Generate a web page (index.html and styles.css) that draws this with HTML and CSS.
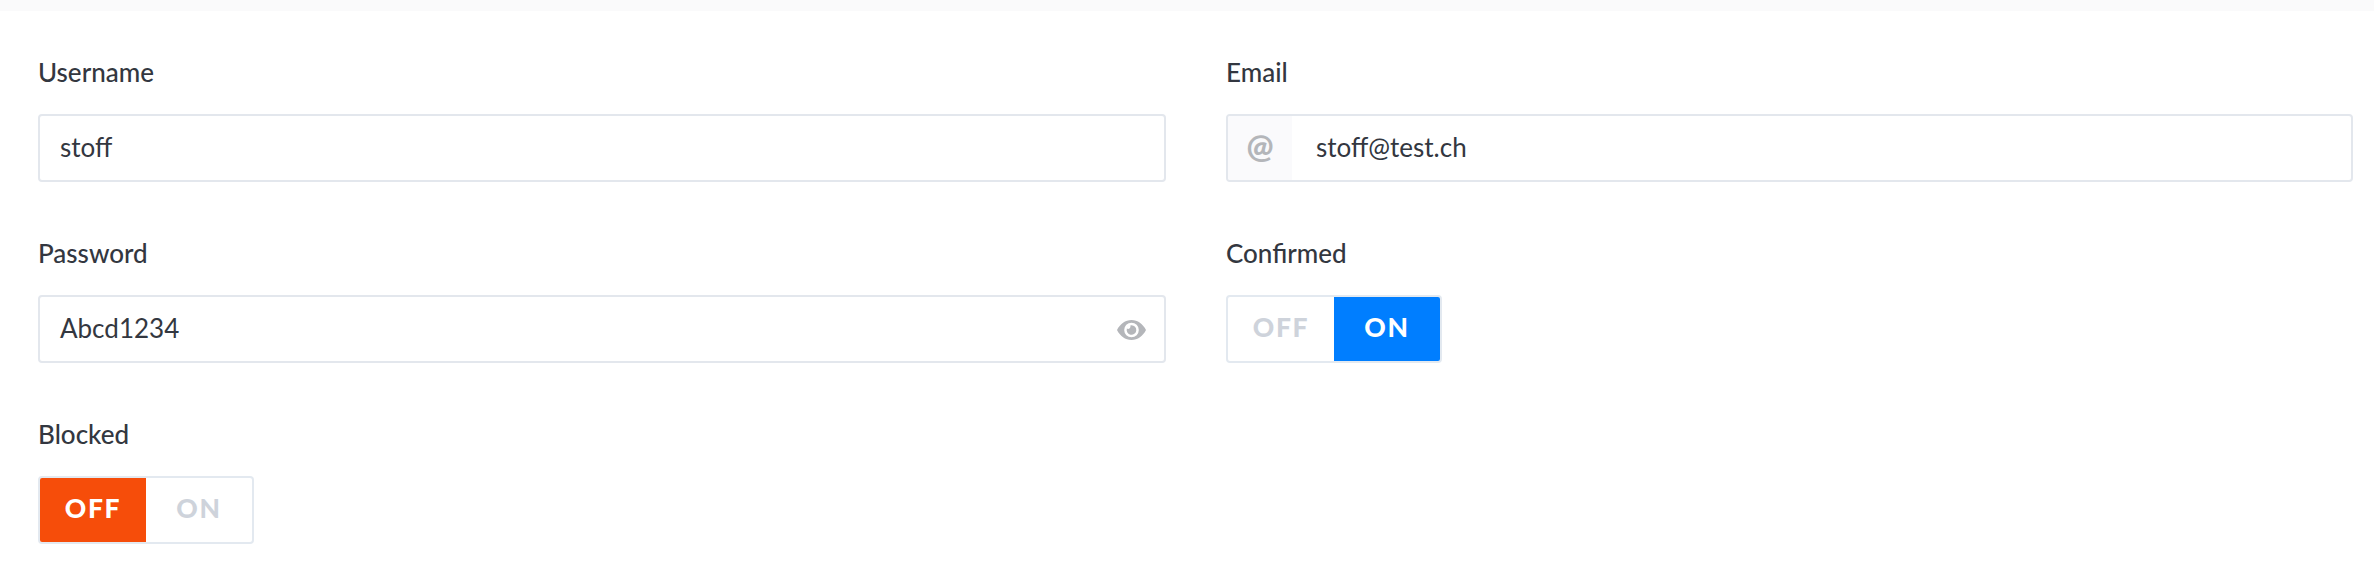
FILE: index.html
```html
<!DOCTYPE html>
<html lang="en">
<head>
<meta charset="utf-8">
<title>User</title>
<link rel="stylesheet" href="styles.css">
</head>
<body>
<div class="strip"></div>
<form class="form">
  <div class="field">
    <label class="label">Username</label>
    <div class="input"><span class="value">stoff</span></div>
  </div>
  <div class="field">
    <label class="label">Email</label>
    <div class="input"><span class="addon">@</span><span class="value value-email">stoff@test.ch</span></div>
  </div>
  <div class="field">
    <label class="label">Password</label>
    <div class="input"><span class="value">Abcd1234</span>
      <svg class="eye" viewBox="0 0 29 20"><path fill="#b4b6ba" fill-rule="evenodd" d="M0 10C3 4 8.300 0 14.500 0S26 4 29 10C26 16 20.700 20 14.500 20S3 16 0 10ZM14.500 2.700a7.300 7.300 0 1 0 0 14.600a7.300 7.300 0 1 0 0-14.600ZM14.500 5.200a4.800 4.800 0 1 1-4.600 3.400a2.500 2.500 0 0 0 3.400-3.200q.6-.2 1.200-.2Z"/></svg>
    </div>
  </div>
  <div class="field">
    <label class="label">Confirmed</label>
    <div class="toggle"><span class="option">OFF</span><span class="option option-on">ON</span></div>
  </div>
  <div class="field">
    <label class="label">Blocked</label>
    <div class="toggle"><span class="option option-off">OFF</span><span class="option">ON</span></div>
  </div>
</form>
</body>
</html>
```
FILE: styles.css
```css
* { box-sizing: border-box; }
body {
  margin: 0;
  background: #fff;
  color: #333740;
  font-family: Lato, sans-serif;
  font-size: 26px;
}
.strip { height: 11px; background: #fafafb; }
.form {
  display: grid;
  grid-template-columns: 1128px 1127px;
  grid-auto-rows: 181px;
  column-gap: 60px;
  padding: 43px 20px 0 38px;
}
.label {
  display: block;
  height: 60px;
  line-height: 36px;
  font-weight: 500;
}
.input {
  display: flex;
  align-items: center;
  height: 68px;
  border: 2px solid #e3e7ed;
  border-radius: 4px;
  overflow: hidden;
}
.value { flex: 1; height: 64px; padding-left: 20px; line-height: 62px; }
.value-email { padding-left: 24px; }
.addon {
  width: 64px;
  height: 64px;
  background: #fafafc;
  color: #b4b6ba;
  font-size: 32px;
  font-weight: 900;
  line-height: 59px;
  text-align: center;
}
.eye { width: 29px; height: 20px; margin: 1px 18px 0 0; }
.toggle {
  display: flex;
  width: 216px;
  height: 68px;
  border: 2px solid #e3e9f0;
  border-radius: 4px;
  overflow: hidden;
}
.option {
  flex: 1;
  color: #ced3db;
  font-size: 26.5px;
  font-weight: 900;
  letter-spacing: 1.7px;
  line-height: 60px;
  text-align: center;
}
.option-on { background: #007eff; color: #fff; }
.option-off { background: #f64d0a; color: #fff; }
```
